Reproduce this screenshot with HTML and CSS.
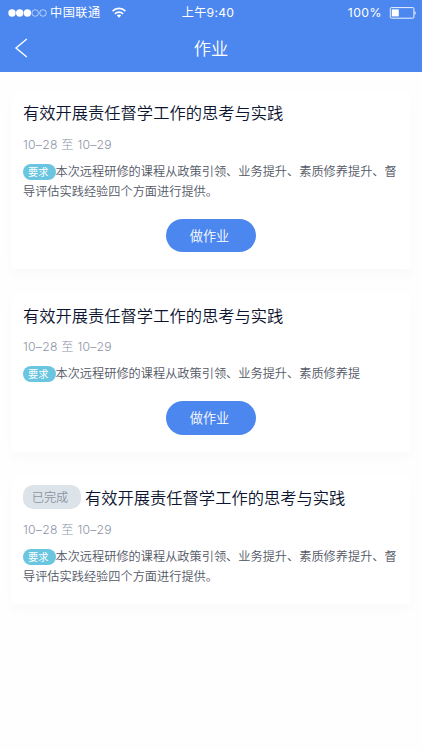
FILE: index.html
```html
<!DOCTYPE html>
<html lang="zh-CN">
<head>
    <meta charset="UTF-8">
    <meta name="viewport" content="width=device-width, initial-scale=1.0">
    <title>作业</title>
    <link rel="stylesheet" href="styles.css">
</head>
<body>

<header class="header">
    <div class="status-bar">
        <div class="carrier">
            <svg class="signal" width="40" height="10" viewBox="0 0 40 10">
                <g fill="#fff">
                    <circle cx="4" cy="5" r="3.7"/>
                    <circle cx="11.7" cy="5" r="3.7"/>
                    <circle cx="19.4" cy="5" r="3.7"/>
                </g>
                <g fill="none" stroke="#fff" stroke-width="0.6">
                    <circle cx="27.2" cy="5" r="3.3"/>
                    <circle cx="35" cy="5" r="3.3"/>
                </g>
            </svg>
            <span class="carrier-name">中国联通</span>
            <svg width="14" height="11" viewBox="0 0 14 11" fill="none" stroke="#fff" stroke-width="1.8">
                <path d="M0.6 4.1a9.1 9.1 0 0 1 12.8 0"/>
                <path d="M3 6.8a5.7 5.7 0 0 1 8 0"/>
                <path d="M7 10.8L4.8 8.6a3.1 3.1 0 0 1 4.4 0z" fill="#fff" stroke="none"/>
            </svg>
        </div>
        <div class="time">上午9:40</div>
        <div class="power">
            <span>100%</span>
            <svg width="27" height="12" viewBox="0 0 27 12">
                <rect x="1.3" y="0.6" width="23.6" height="10.6" rx="1" fill="none" stroke="#fff" stroke-width="0.9"/>
                <rect x="2.8" y="2.4" width="7" height="7" fill="#fff"/>
                <path d="M25.6 3.9c1.4 .5 1.4 3.5 0 4z" fill="#fff"/>
            </svg>
        </div>
    </div>
    <nav class="nav-bar">
        <a class="back" href="#" aria-label="返回">
            <svg width="14" height="20" viewBox="0 0 14 20" fill="none" stroke="#fff" stroke-width="1.4">
                <path d="M12.8 1L2 10l10.8 9"/>
            </svg>
        </a>
        <h1>作业</h1>
    </nav>
</header>

<main class="list">
    <section class="card">
        <h2>有效开展责任督学工作的思考与实践</h2>
        <p class="date">10–28 至 10–29</p>
        <p class="desc"><span class="tag">要求</span>本次远程研修的课程从政策引领、业务提升、素质修养提升、督导评估实践经验四个方面进行提供。</p>
        <button class="btn">做作业</button>
    </section>

    <section class="card">
        <h2>有效开展责任督学工作的思考与实践</h2>
        <p class="date">10–28 至 10–29</p>
        <p class="desc"><span class="tag">要求</span>本次远程研修的课程从政策引领、业务提升、素质修养提</p>
        <button class="btn">做作业</button>
    </section>

    <section class="card">
        <h2><span class="done">已完成</span>有效开展责任督学工作的思考与实践</h2>
        <p class="date">10–28 至 10–29</p>
        <p class="desc"><span class="tag">要求</span>本次远程研修的课程从政策引领、业务提升、素质修养提升、督导评估实践经验四个方面进行提供。</p>
    </section>
</main>

</body>
</html>
```

FILE: styles.css
```css
* {
    box-sizing: border-box;
}
body {
    margin: 0;
    background-color: #fefefe;
    color: #0c1430;
    font-family: "Noto Sans CJK SC", sans-serif;
    font-weight: 350;
}
h1, h2, p {
    margin: 0;
    font-weight: 350;
}
.header {
    height: 72px;
    background-color: #4c87ef;
    color: #fff;
}
.status-bar {
    display: grid;
    grid-template-columns: 1fr auto 1fr;
    align-items: center;
    height: 25px;
    padding: 0 6px 0 8px;
    font-family: Inter, "Noto Sans CJK SC", sans-serif;
    font-size: 12.2px;
    font-weight: 400;
    line-height: 25px;
    letter-spacing: 0.5px;
}
.carrier, .power {
    display: flex;
    align-items: center;
}
.carrier-name {
    margin: 0 11px 0 2px;
}
.time {
    padding-right: 8px;
    letter-spacing: 0.25px;
}
.power {
    justify-content: flex-end;
    gap: 7px;
}
.nav-bar {
    display: grid;
    grid-template-columns: 1fr auto 1fr;
    align-items: center;
    height: 46px;
    padding: 0 14px;
}
.back {
    display: flex;
}
h1 {
    font-size: 17.3px;
    line-height: 24px;
}
.list {
    display: flex;
    flex-direction: column;
    gap: 24.8px;
    padding: 19px 11px;
}
.card {
    padding: 9px 12px 17px;
    background-color: #fff;
    border-radius: 5px;
    box-shadow: 0 6px 10px rgba(80, 90, 180, 0.025);
}
h2 {
    display: flex;
    align-items: center;
    height: 24px;
    font-size: 16.27px;
    line-height: 24px;
    white-space: nowrap;
}
.done {
    width: 58px;
    height: 24px;
    margin-right: 4px;
    padding-right: 4px;
    border-radius: 10px;
    background-color: #dce4ea;
    color: #8b94a2;
    font-size: 12.2px;
    text-align: center;
}
.date {
    margin-top: 10.5px;
    color: #8d93a5;
    font-family: Inter, "Noto Sans CJK SC", sans-serif;
    font-size: 12.2px;
    font-weight: 300;
    line-height: 20px;
    letter-spacing: 0.25px;
}
.desc {
    margin-top: 6px;
    color: #535866;
    font-size: 12.2px;
    line-height: 20.3px;
}
.tag {
    display: inline-block;
    width: 32.5px;
    height: 16px;
    padding-right: 2px;
    border-radius: 8px;
    background-color: #69c5e0;
    color: #fff;
    font-size: 10.2px;
    font-weight: 400;
    line-height: 15px;
    text-align: center;
}
.btn {
    display: block;
    width: 90px;
    height: 33.5px;
    margin: 17.5px auto 0;
    padding: 0 3px 0 0;
    border: none;
    border-radius: 17px;
    background-color: #4c87ef;
    color: #fff;
    font-family: inherit;
    font-size: 13.2px;
    font-weight: 350;
    cursor: pointer;
}
```
